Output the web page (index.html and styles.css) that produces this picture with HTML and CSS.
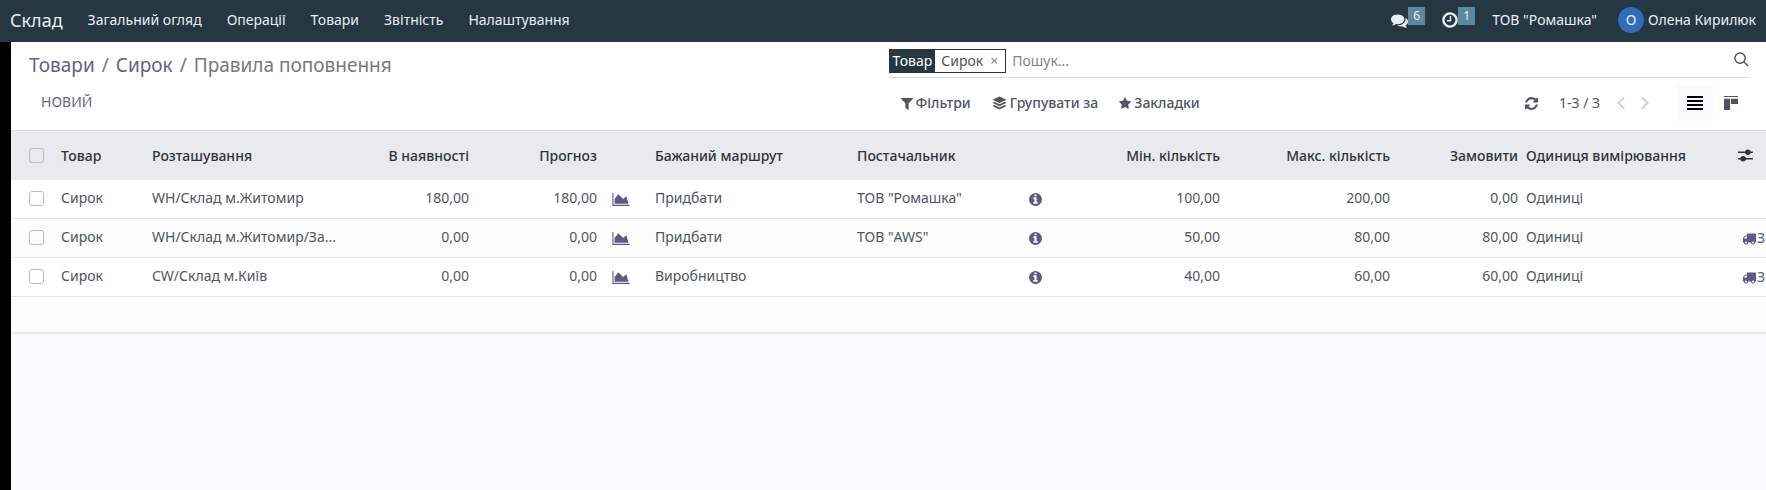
FILE: index.html
```html
<!DOCTYPE html>
<html lang="uk">
<head>
<meta charset="utf-8">
<title>Правила поповнення</title>
<link rel="stylesheet" href="styles.css">
</head>
<body>
<svg class="sprite" aria-hidden="true">
  <symbol id="chart" viewBox="0 0 2048 1792"><path d="M2048 1536v128h-2048v-1536h128v1408h1920zm-384-1024l256 896h-1664v-576l448-576 576 576z"/></symbol>
  <symbol id="info" viewBox="0 0 1792 1792"><path d="M1152 1376v-160q0-14-9-23t-23-9h-96v-512q0-14-9-23t-23-9h-320q-14 0-23 9t-9 23v160q0 14 9 23t23 9h96v320h-96q-14 0-23 9t-9 23v160q0 14 9 23t23 9h448q14 0 23-9t9-23zm-128-896v-160q0-14-9-23t-23-9h-192q-14 0-23 9t-9 23v160q0 14 9 23t23 9h192q14 0 23-9t9-23zm640 416q0 209-103 385.500t-279.500 279.500-385.500 103-385.500-103-279.500-279.500-103-385.500 103-385.500 279.500-279.500 385.500-103 385.500 103 279.500 279.500 103 385.500z"/></symbol>
  <symbol id="truck" viewBox="0 0 1792 1792"><path d="M640 1408q0-52-38-90t-90-38-90 38-38 90 38 90 90 38 90-38 38-90zm-384-512h384v-256h-158q-13 0-22 9l-195 195q-9 9-9 22v30zm1280 512q0-52-38-90t-90-38-90 38-38 90 38 90 90 38 90-38 38-90zm256-1088v1024q0 15-4 26.500t-13.500 18.500-16.500 11.500-23.500 6-22.500 2-25.500 0-22.500-.5q0 106-75 181t-181 75-181-75-75-181h-384q0 106-75 181t-181 75-181-75-75-181h-64q-3 0-22.500.5t-25.500 0-22.500-2-23.500-6-16.500-11.500-13.500-18.500-4-26.500q0-26 19-45t45-19v-320q0-8-.5-35t0-38 2.500-34.500 6.500-37 14-30.500 22.500-30l198-198q19-19 50.500-32t58.500-13h160v-192q0-26 19-45t45-19h1024q26 0 45 19t19 45z"/></symbol>
</svg>

<header class="navbar">
  <a class="brand" href="#">Склад</a>
  <nav class="menu">
    <a href="#">Загальний огляд</a>
    <a href="#">Операції</a>
    <a href="#">Товари</a>
    <a href="#">Звітність</a>
    <a href="#">Налаштування</a>
  </nav>
  <div class="systray">
    <button class="tray" type="button" aria-label="Повідомлення">
      <svg class="tray-icon chat" viewBox="0 0 1792 1792"><path d="M1408 768q0 139-94 257t-256.500 186.500-353.500 68.500q-86 0-176-16-124 88-278 128-36 9-86 16h-3q-11 0-20.500-8t-11.500-21q-1-3-1-6.500t.5-6.500 2-6l2.500-5 3.500-5.500 4-5 4.500-5 4-4.500q5-6 23-25t26-29.500 22.500-29 25-38.500 20.500-44q-124-72-195-177t-71-224q0-139 94-257t256.500-186.500 353.500-68.500 353.500 68.500 256.500 186.500 94 257zm384 256q0 120-71 224.500t-195 176.500q10 24 20.500 44t25 38.500 22.500 29 26 29.500 23 25q1 1 4 4.500t4.500 5 4 5 3.500 5.500l2.500 5 2 6 .5 6.500-1 6.500q-3 14-13 22t-22 7q-50-7-86-16-154-40-278-128-90 16-176 16-271 0-472-132 58 4 88 4 161 0 309-45t264-129q125-92 192-212t67-254q0-77-23-152 129 71 204 178t75 230z"/></svg>
      <span class="count">6</span>
    </button>
    <button class="tray" type="button" aria-label="Дії">
      <svg class="tray-icon clock" viewBox="0 0 16 16"><circle cx="8" cy="8" r="6.600"/><path d="M8.500 4v4.700H5"/></svg>
      <span class="count">1</span>
    </button>
    <button class="company" type="button">ТОВ "Ромашка"</button>
    <button class="user" type="button"><span class="avatar">О</span>Олена Кирилюк</button>
  </div>
</header>

<main class="page">
  <section class="control">
    <div class="control-left">
      <nav class="crumbs"><a href="#">Товари</a><span>/</span><a href="#">Сирок</a><span>/</span><span>Правила поповнення</span></nav>
      <button class="new" type="button">НОВИЙ</button>
    </div>
    <div class="control-right">
      <div class="search">
        <div class="facet">
          <span class="facet-name">Товар</span>
          <span class="facet-value">Сирок</span>
          <button class="facet-close" type="button" aria-label="Вилучити">×</button>
        </div>
        <input class="search-input" type="text" placeholder="Пошук..." aria-label="Пошук">
        <button class="search-go" type="button" aria-label="Шукати">
          <svg viewBox="0 0 16 16"><circle cx="6.500" cy="6.500" r="5.500"/><path d="M10.500 10.500L15 15"/></svg>
        </button>
      </div>
      <div class="tools">
        <button class="tool" type="button"><svg viewBox="192 128 1408 1536"><path d="M1595 295q17 41-14 70l-493 493v742q0 42-39 59-13 5-25 5-27 0-45-19l-256-256q-19-19-19-45v-486l-493-493q-31-29-14-70 17-39 59-39h1280q42 0 59 39z"/></svg>Фільтри</button>
        <button class="tool" type="button"><svg class="wide" viewBox="0 0 16 16"><path d="M8 0.500L15.500 4 8 7.500 0.500 4zM2.600 6.200L8 8.800l5.400-2.600 2.100 1L8 10.800 0.500 7.200zM2.600 9.600L8 12.200l5.400-2.600 2.100 1L8 14.500 0.500 10.600z"/></svg>Групувати за</button>
        <button class="tool" type="button"><svg viewBox="64 64 1664 1664"><path d="M1728 647q0 22-26 48l-363 354 86 500q1 7 1 20 0 21-10.500 35.500t-30.500 14.500q-19 0-40-12l-449-236-449 236q-22 12-40 12-21 0-31.500-14.500t-10.500-35.500q0-6 2-20l86-500-364-354q-25-27-25-48 0-37 56-46l502-73 225-455q19-41 49-41t49 41l225 455 502 73q56 9 56 46z"/></svg>Закладки</button>
        <div class="pager">
          <button class="icon-btn" type="button" aria-label="Оновити"><svg class="refresh" viewBox="128 128 1536 1536"><path d="M1639 1056q0 5-1 7-64 268-268 434.500t-478 166.500q-146 0-282.500-55t-243.500-157l-129 129q-19 19-45 19t-45-19-19-45v-448q0-26 19-45t45-19h448q26 0 45 19t19 45-19 45l-137 137q71 66 161 102t187 36q134 0 250-65t186-179q11-17 53-117 8-23 30-23h192q13 0 22.500 9.500t9.500 22.500zm25-800v448q0 26-19 45t-45 19h-448q-26 0-45-19t-19-45 19-45l138-138q-148-137-349-137-134 0-250 65t-186 179q-11 17-53 117-8 23-30 23h-199q-13 0-22.500-9.500t-9.500-22.500v-7q65-268 270-434.500t480-166.500q146 0 284 55.500t245 156.500l130-129q19-19 45-19t45 19 19 45z"/></svg></button>
          <span class="range">1-3 / 3</span>
          <button class="icon-btn" type="button" aria-label="Назад"><svg class="arrow" viewBox="0 0 10 14"><path d="M8 1.500L2.500 7 8 12.500"/></svg></button>
          <button class="icon-btn" type="button" aria-label="Далі"><svg class="arrow" viewBox="0 0 10 14"><path d="M2 1.500L7.500 7 2 12.500"/></svg></button>
        </div>
        <div class="views">
          <button class="view active" type="button" aria-label="Список"><svg viewBox="0 0 16 14"><path d="M0 0h16v2H0zM0 4h16v2H0zM0 8h16v2H0zM0 12h16v2H0z"/></svg></button>
          <button class="view" type="button" aria-label="Канбан"><svg viewBox="0 0 16 16"><path d="M0 0h16v1H0zM0 3h7v13H0zM8 3h8v6H8z"/></svg></button>
        </div>
      </div>
    </div>
  </section>

  <div class="list">
    <table>
      <colgroup>
        <col class="c-check"><col class="c-product"><col class="c-place"><col class="c-num"><col class="c-num"><col class="c-chart"><col class="c-route"><col class="c-vendor"><col class="c-info"><col class="c-qty"><col class="c-qty"><col class="c-num"><col class="c-unit"><col class="c-action">
      </colgroup>
      <thead>
        <tr>
          <th class="check"><input type="checkbox" aria-label="Вибрати все"></th>
          <th>Товар</th>
          <th>Розташування</th>
          <th class="num">В наявності</th>
          <th class="num">Прогноз</th>
          <th></th>
          <th>Бажаний маршрут</th>
          <th>Постачальник</th>
          <th></th>
          <th class="num">Мін. кількість</th>
          <th class="num">Макс. кількість</th>
          <th class="num">Замовити</th>
          <th>Одиниця вимірювання</th>
          <th class="options"><button class="icon-btn" type="button" aria-label="Стовпці"><svg class="sliders" viewBox="0 0 16 14"><path d="M0 3.500h16M0 10.500h16"/><circle cx="10.500" cy="3.500" r="3"/><circle cx="5.500" cy="10.500" r="3"/></svg></button></th>
        </tr>
      </thead>
      <tbody>
        <tr>
          <td class="check"><input type="checkbox" aria-label="Вибрати рядок 1"></td>
          <td>Сирок</td>
          <td>WH/Склад м.Житомир</td>
          <td class="num">180,00</td>
          <td class="num">180,00</td>
          <td class="chart"><button class="icon-btn" type="button" aria-label="Прогноз"><svg><use href="#chart"/></svg></button></td>
          <td>Придбати</td>
          <td>ТОВ "Ромашка"</td>
          <td class="info"><button class="icon-btn" type="button" aria-label="Інформація"><svg><use href="#info"/></svg></button></td>
          <td class="num">100,00</td>
          <td class="num">200,00</td>
          <td class="num">0,00</td>
          <td>Одиниці</td>
          <td></td>
        </tr>
        <tr>
          <td class="check"><input type="checkbox" aria-label="Вибрати рядок 2"></td>
          <td>Сирок</td>
          <td>WH/Склад м.Житомир/За...</td>
          <td class="num">0,00</td>
          <td class="num">0,00</td>
          <td class="chart"><button class="icon-btn" type="button" aria-label="Прогноз"><svg><use href="#chart"/></svg></button></td>
          <td>Придбати</td>
          <td>ТОВ "AWS"</td>
          <td class="info"><button class="icon-btn" type="button" aria-label="Інформація"><svg><use href="#info"/></svg></button></td>
          <td class="num">50,00</td>
          <td class="num">80,00</td>
          <td class="num">80,00</td>
          <td>Одиниці</td>
          <td class="action"><button class="order" type="button"><svg><use href="#truck"/></svg>З</button></td>
        </tr>
        <tr>
          <td class="check"><input type="checkbox" aria-label="Вибрати рядок 3"></td>
          <td>Сирок</td>
          <td>CW/Склад м.Київ</td>
          <td class="num">0,00</td>
          <td class="num">0,00</td>
          <td class="chart"><button class="icon-btn" type="button" aria-label="Прогноз"><svg><use href="#chart"/></svg></button></td>
          <td>Виробництво</td>
          <td></td>
          <td class="info"><button class="icon-btn" type="button" aria-label="Інформація"><svg><use href="#info"/></svg></button></td>
          <td class="num">40,00</td>
          <td class="num">60,00</td>
          <td class="num">60,00</td>
          <td>Одиниці</td>
          <td class="action"><button class="order" type="button"><svg><use href="#truck"/></svg>З</button></td>
        </tr>
      </tbody>
      <tfoot>
        <tr><td colspan="14"></td></tr>
      </tfoot>
    </table>
  </div>
</main>
</body>
</html>
```
FILE: styles.css
```css
* { box-sizing: border-box; }

body {
  margin: 0;
  min-height: 100vh;
  display: flex;
  flex-direction: column;
  background: #000;
  color: #50555f;
  font-family: "Noto Sans", "Open Sans", sans-serif;
  font-size: 14px;
  line-height: 20px;
}

a { color: inherit; text-decoration: none; }

button {
  margin: 0;
  padding: 0;
  border: 0;
  background: none;
  color: inherit;
  font: inherit;
  cursor: pointer;
}

svg { display: block; fill: currentColor; }

.sprite { position: absolute; width: 0; height: 0; }

/* Top bar */
.navbar {
  display: flex;
  align-items: center;
  height: 42px;
  padding: 0 10px 2px;
  background: #243742;
  color: #e9eef1;
  white-space: nowrap;
}

.brand { font-size: 18px; }

.menu { display: flex; gap: 25px; margin-left: 25px; }

.systray { display: flex; align-items: center; margin-left: auto; }

.tray { display: flex; align-items: center; margin-right: 17px; }

.tray-icon { width: 17px; height: 17px; }

.clock { width: 16px; height: 16px; fill: none; stroke: currentColor; stroke-width: 2.4; }
.clock path { stroke-width: 1.500; }

.count {
  width: 17px;
  height: 18px;
  margin-bottom: 8px;
  background: #5a8aa0;
  font-size: 12px;
  line-height: 18px;
  text-align: center;
}

.company { margin-right: 21px; }

.user { display: flex; align-items: center; gap: 4px; }

.avatar {
  width: 26px;
  height: 26px;
  border-radius: 50%;
  background: #2f6cba;
  line-height: 26px;
  text-align: center;
}

/* Page */
.page {
  flex: 1;
  margin-left: 11px;
  background: #f9fafb;
}

.control {
  display: grid;
  grid-template-columns: 1fr 1fr;
  height: 88px;
  background: #fff;
}

.control-left { padding: 10px 0 0 18px; }

.control-right { padding-right: 17px; }

.crumbs {
  display: flex;
  gap: 7px;
  color: #75797c;
  font-size: 19px;
  line-height: 26px;
}

.crumbs a { color: #66608a; }

.new {
  display: block;
  margin: 14px 0 0 12px;
  color: #66608a;
}

.search {
  display: flex;
  align-items: center;
  height: 36px;
  padding-bottom: 1px;
  border-bottom: 1px solid #d8dadd;
}

.facet {
  display: flex;
  height: 24px;
  margin-top: 4px;
  border: 1px solid #243742;
  line-height: 22px;
}

.facet-name { padding: 0 3px; background: #243742; color: #fff; }

.facet-value { padding: 0 6px; }

.facet-close { padding: 0 7px 0 1px; color: #85898d; line-height: 20px; }

.search-input {
  flex: 1;
  min-width: 0;
  margin-top: 3px;
  padding: 0 6px;
  border: 0;
  outline: 0;
  background: none;
  color: inherit;
  font: inherit;
}

.search-input::placeholder { color: #7f8386; opacity: 1; }

.search-go svg {
  width: 15px;
  height: 15px;
  fill: none;
  stroke: #4a4f59;
  stroke-width: 1.500;
}

.tools { display: flex; align-items: center; height: 50px; padding-left: 12px; }

.tool {
  display: flex;
  align-items: center;
  gap: 3px;
  margin-right: 21px;
  font-weight: 500;
}

.tool svg { width: 12px; height: 13px; }
.tool svg.wide { width: 15px; height: 15px; }

.pager { display: flex; align-items: center; margin-left: auto; }

.refresh { width: 13px; height: 13px; }

.range { margin: 0 16px 0 21px; }

.arrow {
  width: 10px;
  height: 14px;
  margin-right: 14px;
  fill: none;
  stroke: #cfd1d3;
  stroke-width: 2;
}

.views { display: flex; margin-left: 13px; }

.view {
  display: flex;
  align-items: center;
  justify-content: center;
  width: 36px;
  height: 36px;
}

.view svg { width: 16px; height: 14px; }

.active { background: #f8f9fa; color: #000; }

/* List */
.list { overflow: hidden; }

table {
  width: 100%;
  border-collapse: separate;
  border-spacing: 0;
  border-bottom: 2px solid #e9eaec;
  table-layout: fixed;
  background: #fff;
}

.c-check { width: 46px; }
.c-product { width: 91px; }
.c-place { width: 197px; }
.c-num { width: 128px; }
.c-chart { width: 50px; }
.c-route { width: 202px; }
.c-vendor { width: 173px; }
.c-info { width: 28px; }
.c-qty { width: 170px; }
.c-unit { width: 208px; }
.c-action { width: 36px; }

th, td {
  padding: 0 4px;
  text-align: left;
  white-space: nowrap;
}

th {
  height: 50px;
  border-top: 1px solid #d8dadd;
  background: #e9eaee;
  color: #2f333b;
  font-weight: 500;
}

td { height: 39px; padding-bottom: 2px; border-bottom: 1px solid #e6e7e9; }

tbody tr:nth-child(even) td,
tfoot td { background: #fcfcfd; }

tfoot td { height: 35px; border-bottom: 0; }

.num { text-align: right; }

.check { padding-left: 18px; }

.check input {
  appearance: none;
  display: block;
  width: 15px;
  height: 15px;
  margin: 0;
  border: 1px solid #b9bcc0;
  border-radius: 3px;
}

.chart, .info, .action { color: #5f5888; }

.chart, .info, .action { padding-bottom: 0; }

.list .icon-btn { display: block; }

.chart { padding-left: 11px; }
.chart svg { width: 18px; height: 15px; }

.info { padding-left: 2px; }
.info svg { width: 15px; height: 15px; }

.options { padding-left: 8px; }

.sliders { width: 15px; height: 13px; stroke: currentColor; stroke-width: 1.500; }
.sliders circle { stroke: none; }

.action { padding: 0 0 0 12px; }

.order { display: flex; align-items: center; gap: 1px; }
.order svg { width: 14px; height: 15px; flex: none; }
```
